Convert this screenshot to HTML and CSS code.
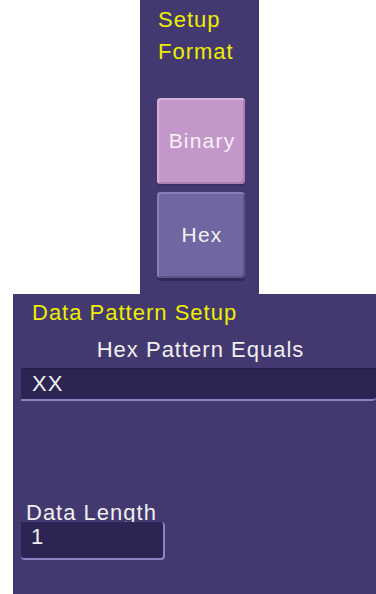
FILE: index.html
```html
<!DOCTYPE html>
<html>
<head>
<meta charset="utf-8">
<link rel="stylesheet" href="styles.css">
</head>
<body>
<div class="top-panel">
  <div class="panel-title">Setup<br>Format</div>
  <div class="btn-stack">
    <div class="btn btn-binary">Binary</div>
    <div class="btn btn-hex">Hex</div>
  </div>
</div>
<div class="bottom-panel">
  <div class="section-title">Data Pattern Setup</div>
  <div class="field-caption">Hex Pattern Equals</div>
  <div class="field field-wide">XX</div>
  <div class="length-label">Data Length</div>
  <div class="field field-short">1</div>
</div>
</body>
</html>
```
FILE: styles.css
```css
html, body {
  margin: 0;
  padding: 0;
  background: #ffffff;
}
body {
  width: 376px;
  height: 594px;
  overflow: hidden;
  font-family: "Liberation Sans", Arial, sans-serif;
}
.top-panel {
  margin-left: 140px;
  width: 119px;
  height: 294px;
  background: #433870;
  box-sizing: border-box;
  padding-top: 4px;
}
.panel-title {
  color: #eeee00;
  font-size: 22px;
  line-height: 32px;
  letter-spacing: 1px;
  padding-left: 18px;
}
.btn-stack {
  display: flex;
  flex-direction: column;
  gap: 8px;
  margin-top: 30px;
  padding-left: 17px;
}
.btn {
  width: 88px;
  height: 86px;
  box-sizing: border-box;
  border-radius: 4px;
  display: flex;
  align-items: center;
  justify-content: center;
  color: #f4f4f4;
  font-size: 21px;
  letter-spacing: 1.2px;
  padding-left: 2px;
}
.btn-binary {
  background: #c497ca;
  box-shadow: inset 2px 2px 0 #d5b0d9, inset -2px -2px 0 #a97fb2, 0 2px 0 #3a2f62;
}
.btn-hex {
  background: #6f66a2;
  box-shadow: inset 2px 2px 0 #8780b6, inset -2px -2px 0 #5b528c, 0 3px 0 #32285a;
}
.bottom-panel {
  margin-left: 13px;
  width: 363px;
  height: 300px;
  background: #433870;
  box-sizing: border-box;
  padding-top: 7px;
}
.section-title {
  color: #eeee00;
  font-size: 22px;
  line-height: 24px;
  letter-spacing: 1px;
  padding-left: 19px;
}
.field-caption {
  color: #f0f0f0;
  font-size: 22px;
  line-height: 24px;
  letter-spacing: 1px;
  margin-top: 13px;
  text-align: center;
  padding-left: 12px;
}
.field {
  position: relative;
  margin-left: 8px;
  box-sizing: border-box;
  background: #2e2453;
  color: #f0f0f0;
  font-size: 22px;
  line-height: 22px;
  letter-spacing: 1px;
  padding-top: 4px;
  padding-left: 11px;
  border-bottom: 2px solid #8c83c2;
  border-radius: 0 0 4px 0;
}
.field-wide {
  margin-top: 6px;
  width: 355px;
  height: 33px;
  padding-top: 5px;
  box-shadow: inset 0 1px 0 #251d45;
}
.length-label {
  color: #f0f0f0;
  font-size: 22px;
  line-height: 20px;
  letter-spacing: 1px;
  margin-top: 102px;
  padding-left: 13px;
}
.field-short {
  margin-top: -1px;
  width: 144px;
  height: 38px;
  border-right: 2px solid #8c83c2;
  border-radius: 0 4px 4px 4px;
  padding-left: 10px;
}
```
